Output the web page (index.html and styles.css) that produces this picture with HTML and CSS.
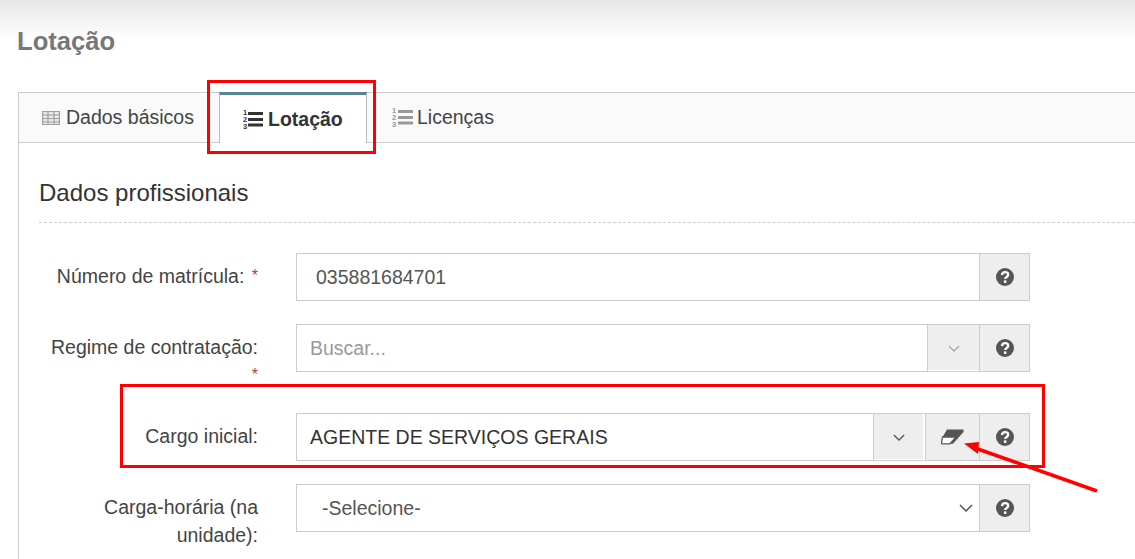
FILE: index.html
```html
<!DOCTYPE html>
<html lang="pt">
<head>
<meta charset="utf-8">
<title>Lotação</title>
<link rel="stylesheet" href="styles.css">
</head>
<body>
<svg class="defs" width="0" height="0" aria-hidden="true">
  <symbol id="i-help" viewBox="0 0 18 18">
    <circle cx="9" cy="9" r="9" fill="#555"/>
    <path d="M5.900 7c.2-1.800 1.500-2.800 3.200-2.800 1.800 0 3.100 1 3.100 2.500 0 2.300-3 2.200-3 4.300" fill="none" stroke="#fff" stroke-width="2.300"/>
    <rect x="7.900" y="12.400" width="2.500" height="2.500" fill="#fff"/>
  </symbol>
  <symbol id="i-chev" viewBox="0 0 14 8">
    <path d="M1 1l6 6 6-6" fill="none" stroke="currentColor" stroke-width="1.500"/>
  </symbol>
</svg>

<header class="page-head"><h1>Lotação</h1></header>

<nav class="tabs">
  <a class="tab">
    <svg class="tab-ico" width="18" height="16" viewBox="0 0 18 16">
      <path d="M.6 1.500h16.800v13H.6zM.6 5h16.800M.6 8.500h16.800M.6 12h16.800M6 1.500v13M12 1.500v13" fill="#e8e8e8" stroke="#a0a0a0" stroke-width="1.200"/>
    </svg>
    Dados básicos
  </a>
  <a class="tab tab-active">
    <svg class="tab-ico" width="20" height="21" viewBox="0 0 20 21">
      <g fill="currentColor">
        <rect x="5" y="3" width="15" height="3"/>
        <rect x="5" y="9" width="15" height="3"/>
        <rect x="5" y="14.500" width="15" height="3"/>
        <text class="mini"><tspan x="0" y="6">1</tspan><tspan x="0" y="13">2</tspan><tspan x="0" y="20">3</tspan></text>
      </g>
    </svg>
    Lotação
  </a>
  <a class="tab tab-last">
    <svg class="tab-ico" width="21" height="21" viewBox="0 0 21 21">
      <g fill="currentColor">
        <rect x="6" y="3" width="15" height="3"/>
        <rect x="6" y="9" width="15" height="3"/>
        <rect x="6" y="14.500" width="15" height="3"/>
        <text class="mini"><tspan x="0" y="6">1</tspan><tspan x="0" y="13">2</tspan><tspan x="0" y="20">3</tspan></text>
      </g>
    </svg>
    Licenças
  </a>
</nav>

<main class="panel">
  <h2 class="section-title">Dados profissionais</h2>

  <div class="row">
    <label class="lbl">Número de matrícula: <span class="req">*</span></label>
    <div class="group">
      <input class="field field-num" type="text" value="035881684701">
      <span class="addon addon-help"><svg width="18" height="18"><use href="#i-help"/></svg></span>
    </div>
  </div>

  <div class="row">
    <label class="lbl">Regime de contratação: <span class="req">*</span></label>
    <div class="group">
      <input class="field" type="text" placeholder="Buscar...">
      <span class="addon addon-chev addon-muted"><svg width="12" height="7"><use href="#i-chev"/></svg></span>
      <span class="addon addon-help"><svg width="18" height="18"><use href="#i-help"/></svg></span>
    </div>
  </div>

  <div class="row">
    <label class="lbl">Cargo inicial:</label>
    <div class="group">
      <input class="field field-up" type="text" value="AGENTE DE SERVIÇOS GERAIS">
      <span class="addon addon-chev addon-dark"><svg width="12" height="7"><use href="#i-chev"/></svg></span>
      <span class="addon addon-erase">
        <svg width="23" height="16" viewBox="0 0 23 16">
          <path d="M6 .5h16.500v2.500L12 14.800H9L15 8H1.500z" fill="#555"/>
          <path d="M1.500 8H15L9 14.800H1.500Q0 14.800.7 13z" fill="#fff" stroke="#555" stroke-width="1.300"/>
        </svg>
      </span>
      <span class="addon addon-help"><svg width="18" height="18"><use href="#i-help"/></svg></span>
    </div>
  </div>

  <div class="row">
    <label class="lbl">Carga-horária (na unidade):</label>
    <div class="group">
      <div class="select-wrap">
        <select class="field field-sel"><option>-Selecione-</option></select>
        <svg class="select-chev" width="14" height="8"><use href="#i-chev"/></svg>
      </div>
      <span class="addon addon-help"><svg width="18" height="18"><use href="#i-help"/></svg></span>
    </div>
  </div>
</main>

<div class="mark mark-tab"></div>
<div class="mark mark-cargo"></div>
<svg class="arrow" width="150" height="60" viewBox="0 0 150 60">
  <path d="M147 55 L25 12" stroke="#f00" stroke-width="3.500" fill="none"/>
  <path d="M14 7.500 L29 6 L28 18z" fill="#f00"/>
</svg>
</body>
</html>
```

FILE: styles.css
```css
* { box-sizing: border-box; }
html, body { margin: 0; height: 559px; overflow: hidden; }
body {
  position: relative;
  background: #fff;
  color: #333;
  font-family: "Liberation Sans", Arial, sans-serif;
  font-size: 19.5px;
}
.defs { position: absolute; }
.mini { font: bold 7.5px "Liberation Sans", sans-serif; }

.page-head {
  height: 92px;
  padding: 26px 0 0 17px;
  background: linear-gradient(#e6e6e6 0, #fff 40px);
}
.page-head h1 {
  margin: 0;
  font-size: 25.6px;
  line-height: 30px;
  font-weight: bold;
  color: #777;
}

.tabs {
  display: flex;
  height: 51px;
  margin-left: 18px;
  background: #fafafa;
  border: 1px solid #ccc;
  border-right: 0;
}
.tab {
  display: flex;
  align-items: center;
  gap: 6px;
  height: 49px;
  padding: 0 0 0 23px;
  width: 200px;
  color: #444;
  white-space: nowrap;
}
.tab-ico { color: #999; flex: none; }
.tab-active {
  gap: 5px;
  width: 148px;
  height: 51px;
  margin-top: -1px;
  padding: 0 0 0 23px;
  background: #fff;
  border: 1px solid #bbb;
  border-top: 3px solid #568595;
  border-bottom: 0;
  color: #333;
  font-weight: bold;
}
.tab-active .tab-ico { color: #333; }
.tab-last { padding-left: 25px; gap: 4px; width: auto; }

.panel {
  margin-left: 18px;
  height: 416px;
  padding: 0 105px 0 20px;
  border-left: 1px solid #ccc;
}
.section-title {
  margin: 0 -105px 30px 0;
  height: 80px;
  padding-top: 36px;
  font-size: 24px;
  line-height: 28px;
  font-weight: normal;
  color: #333;
  border-bottom: 1px dashed #ccc;
}

.row {
  display: grid;
  grid-template-columns: 219px 1fr;
  column-gap: 38px;
  margin-bottom: 23px;
  align-items: start;
}
.lbl {
  padding: 9px 0 1px 6px;
  line-height: 28px;
  text-align: right;
  color: #444;
  font-size: 19.5px;
}
.req {
  margin-left: 2px;
  color: #a94442;
  font-size: 16px;
  line-height: 0;
  vertical-align: 2px;
}

.group { display: flex; height: 48px; }
.field {
  flex: 1;
  min-width: 0;
  height: 48px;
  padding: 0 13px;
  border: 1px solid #ccc;
  border-right: 0;
  background: #fff;
  color: #333;
  font: inherit;
  outline: 0;
}
.field::placeholder { color: #999; opacity: 1; }
.field-num { padding-left: 19px; color: #555; }
.addon {
  display: flex;
  align-items: center;
  justify-content: center;
  flex: none;
  height: 48px;
  background: #eee;
  border: 1px solid #ccc;
}
.addon-help { width: 51px; color: #555; }
.addon-chev { width: 52px; border-right: 0; box-shadow: inset 0 -1px 0 #fff; }
.addon-muted { color: #aaa; }
.addon-dark { color: #555; border-right: 2px solid #fff; }
.addon-erase { width: 54px; border-right: 0; }

.select-wrap { position: relative; flex: 1; min-width: 0; }
.field-sel {
  display: block;
  width: 100%;
  padding-left: 25px;
  appearance: none;
  color: #555;
}
.select-chev {
  position: absolute;
  right: 6px;
  top: 20px;
  color: #555;
}

.mark {
  position: absolute;
  border: 3px solid #f00;
  pointer-events: none;
}
.mark-tab { left: 207px; top: 80px; width: 169px; height: 74px; }
.mark-cargo { left: 120px; top: 384px; width: 925px; height: 84px; }
.arrow { position: absolute; left: 950px; top: 436px; }
```
